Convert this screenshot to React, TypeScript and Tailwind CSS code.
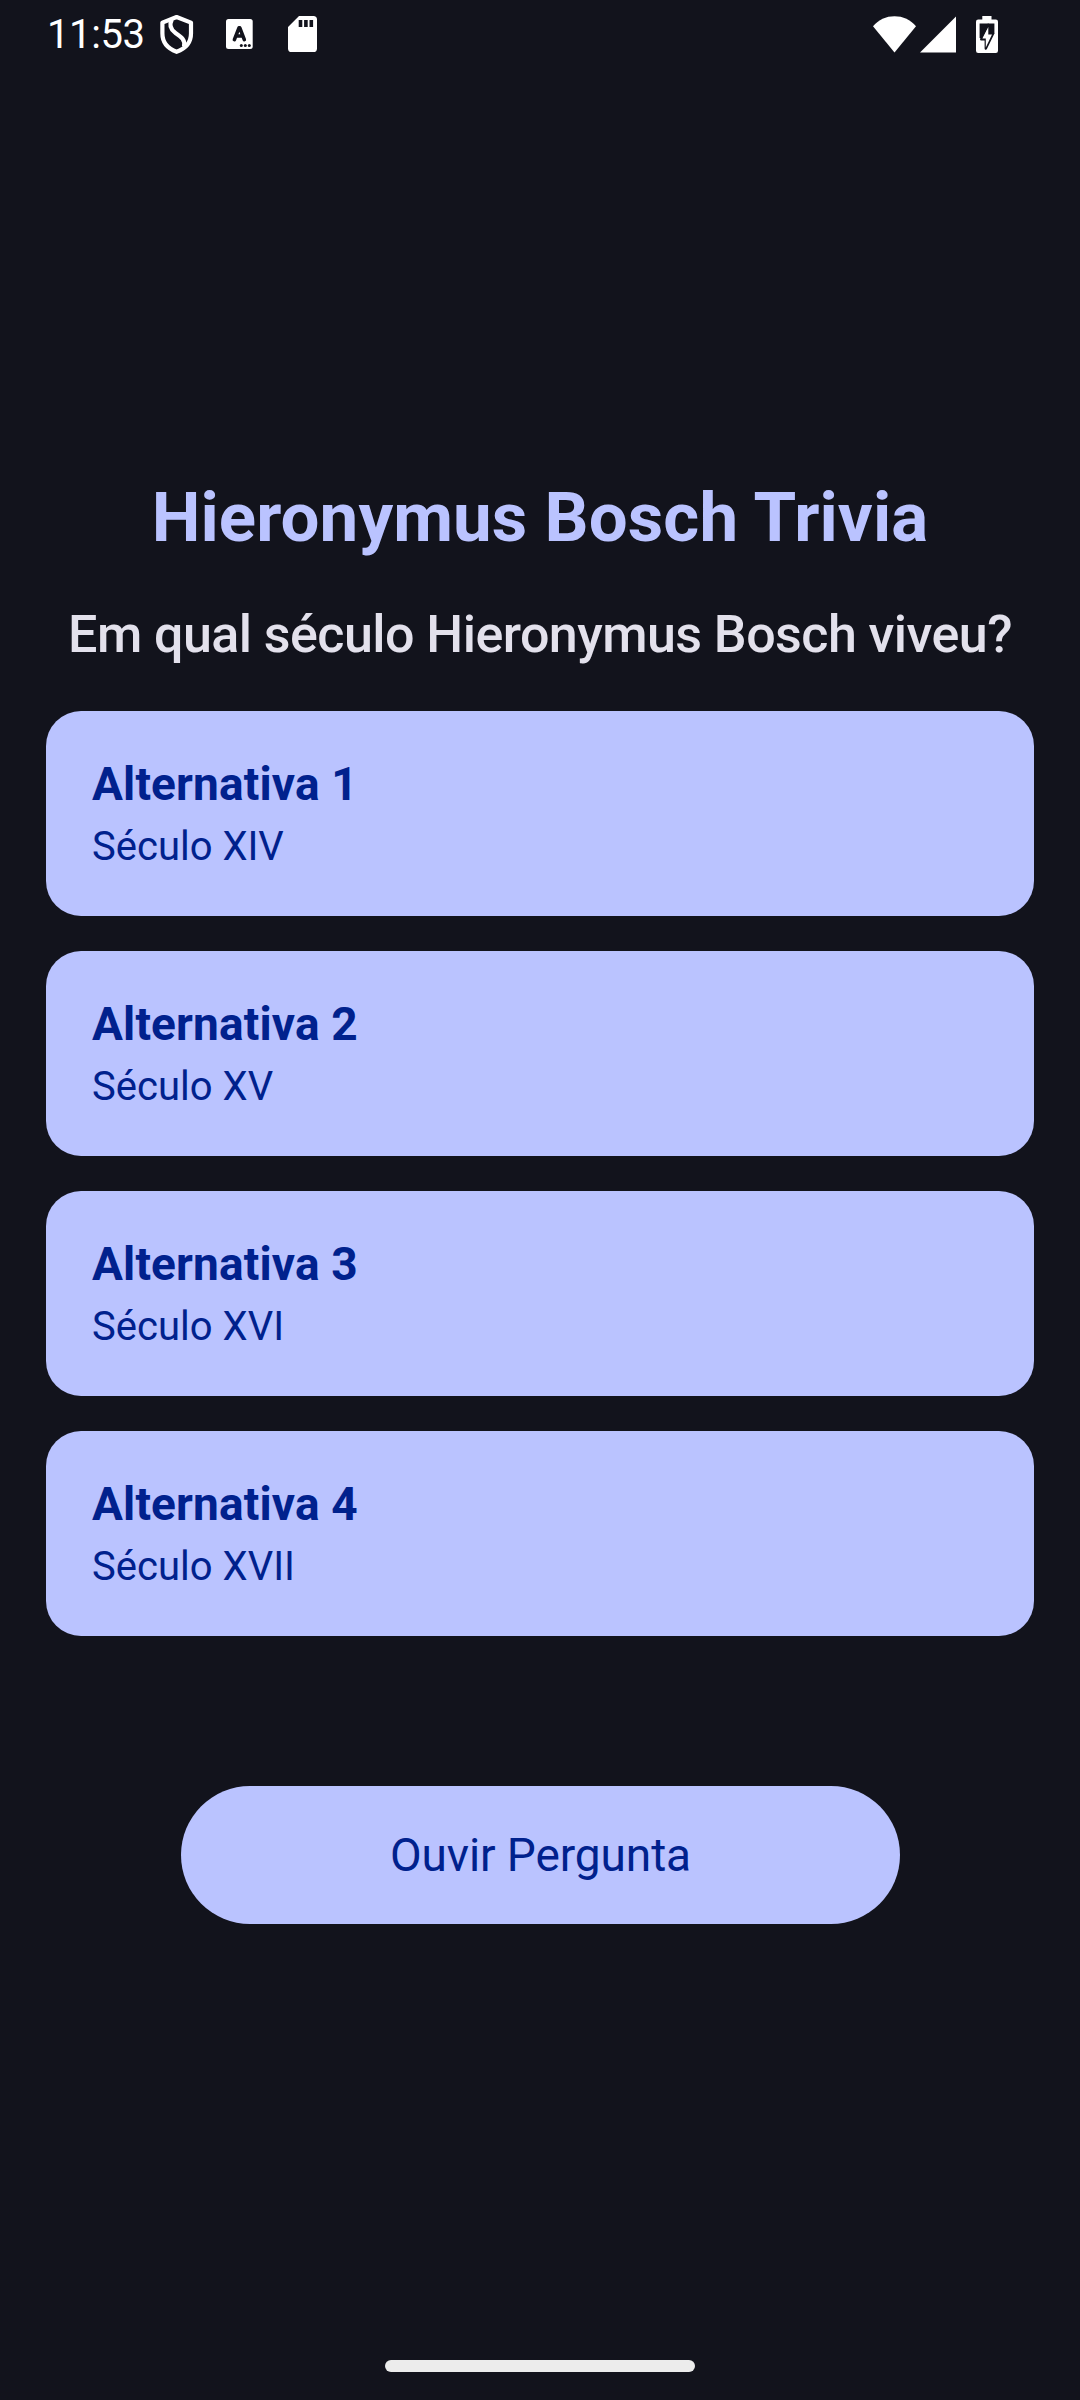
const centuries = ["Século XIV", "Século XV", "Século XVI", "Século XVII"];

function ShieldIcon() {
  return (
    <svg width="34" height="40" viewBox="160 15 34 40" fill="none" stroke="#fff" strokeWidth="4.2" strokeLinejoin="round">
      <path d="M176.6 17 L191 22.6 V33.5 C191 42.5 185.5 48.6 176.6 51.8 C167.7 48.6 162.4 42.5 162.4 33.5 V22.6 Z" />
      <path d="M171.8 19.5 C168.8 25.5 170.5 29.5 175.5 33 C181 36.8 185.4 39.5 184 46.4" />
    </svg>
  );
}

function KeyboardIcon() {
  return (
    <svg width="27" height="30" viewBox="226 19 27 30">
      <rect x="226" y="19" width="26.7" height="30" rx="2.5" fill="#fff" />
      <path d="M234.4 39.6 L239 27.8 H239.8 L244.3 39.6 M236.2 36 H242.4" fill="none" stroke="#12131c" strokeWidth="3.6" strokeLinecap="round" strokeLinejoin="round" />
      <circle cx="241.3" cy="45.6" r="1.5" fill="#12131c" />
      <circle cx="245.3" cy="45.6" r="1.5" fill="#12131c" />
      <circle cx="249.3" cy="45.6" r="1.5" fill="#12131c" />
    </svg>
  );
}

function SdCardIcon() {
  return (
    <svg width="30" height="36" viewBox="288 16 30 36">
      <path d="M299 16 H313.4 A3.6 3.6 0 0 1 317 19.6 V48.4 A3.6 3.6 0 0 1 313.4 52 H291.6 A3.6 3.6 0 0 1 288 48.4 V27 Z" fill="#fff" />
      <path d="M298.7 20 h3.6 v7 h-3.6z M304.1 20 h3.6 v7 h-3.6z M309.5 20 h3.6 v7 h-3.6z" fill="#12131c" />
    </svg>
  );
}

function WifiIcon() {
  return (
    <svg width="43" height="37" viewBox="873 16 43 37">
      <path d="M894.5 52.4 L873 26.3 C878.5 19.5 886 16.2 894.5 16.2 C903 16.2 910.5 19.5 916 26.3 Z" fill="#fff" />
    </svg>
  );
}

function SignalIcon() {
  return (
    <svg width="37" height="37" viewBox="0 0 37 37">
      <path d="M0 36.6 L36 0.4 V36.6 Z" fill="#fff" />
    </svg>
  );
}

function BatteryIcon() {
  return (
    <svg width="22" height="37" viewBox="976 16 22 37">
      <path d="M982.3 16 H991.5 V19.6 H995.8 A2.2 2.2 0 0 1 998 21.8 V50.8 A2.2 2.2 0 0 1 995.8 53 H978.2 A2.2 2.2 0 0 1 976 50.8 V21.8 A2.2 2.2 0 0 1 978.2 19.6 H982.3 Z" fill="#fff" />
      <path d="M979.6 23.5 H994.4 V34 H988 L981 38 H979.6 Z" fill="#12131c" />
      <path d="M988.3 24.8 V33.8 H993 L985.8 48.6 V39.3 H981.2 Z" fill="#fff" stroke="#12131c" strokeWidth="2.4" strokeLinejoin="round" />
      <path d="M988.3 27 V34.6 H992 L985.8 47.4 V38.4 H982.4 Z" fill="#fff" />
    </svg>
  );
}

export default function App() {
  return (
    <div className="flex h-[2400px] w-[1080px] flex-col overflow-hidden bg-[#12131c] font-['Roboto',sans-serif]">
      <header className="flex h-[68px] items-start justify-between pl-[47px] pr-[82px] text-white">
        <div className="flex items-start">
          <span className="mt-[15px] w-[113px] text-[40px] leading-[40px] tracking-[-0.4px]">11:53</span>
          <div className="mt-[15px]"><ShieldIcon /></div>
          <div className="ml-[32px] mt-[19px]"><KeyboardIcon /></div>
          <div className="ml-[35px] mt-[16px]"><SdCardIcon /></div>
        </div>
        <div className="flex items-start pt-[16px]">
          <WifiIcon />
          <div className="ml-[4px]"><SignalIcon /></div>
          <div className="ml-[19px]"><BatteryIcon /></div>
        </div>
      </header>
      <main className="flex flex-col items-center px-[46px] pt-[404px]">
        <h1 className="whitespace-nowrap text-[69px] font-bold leading-[92px] tracking-[0.1px] text-[#bac3ff]">Hieronymus Bosch Trivia</h1>
        <h2 className="mt-[36px] whitespace-nowrap text-[52px] font-medium leading-[70px] tracking-[-0.55px] text-[#e3e1ec]">Em qual século Hieronymus Bosch viveu?</h2>
        <div className="mt-[41px] flex w-full flex-col gap-[35px]">
          {centuries.map((century, i) => (
            <button key={century} className="flex h-[205px] flex-col items-start rounded-[35px] bg-[#bac3ff] px-[46px] pt-[42px] text-left text-[#00218d]">
              <span className="text-[46px] font-bold leading-[62px] tracking-[0.15px]">Alternativa {i + 1}</span>
              <span className="mt-px text-[40px] leading-[62px]">{century}</span>
            </button>
          ))}
        </div>
        <button className="mt-[150px] h-[138px] w-[719px] rounded-full bg-[#bac3ff] pl-px text-[46px] tracking-[-0.1px] text-[#00218d]">Ouvir Pergunta</button>
      </main>
      <div className="mx-auto mb-[28px] mt-auto h-[12px] w-[310px] rounded-full bg-[#ececec]" />
    </div>
  );
}
